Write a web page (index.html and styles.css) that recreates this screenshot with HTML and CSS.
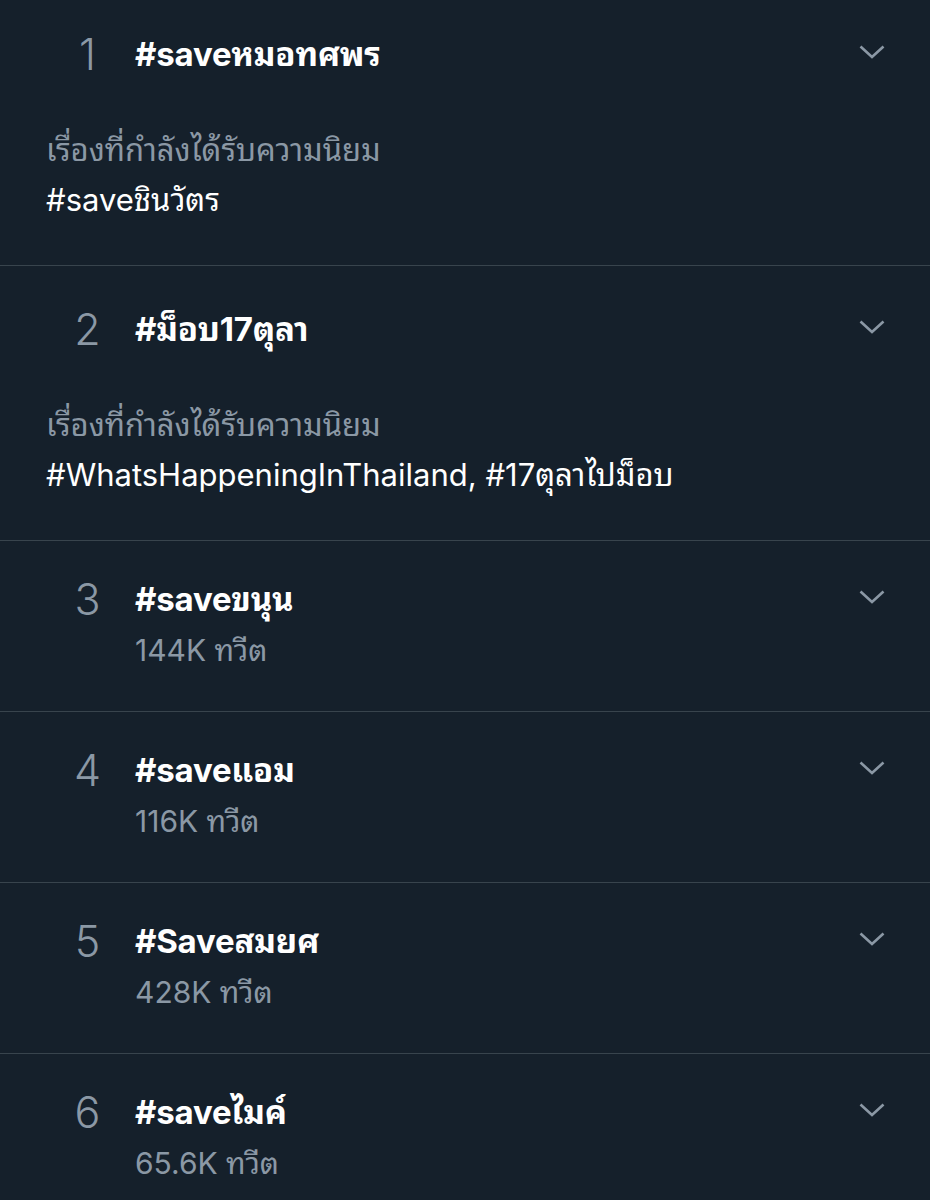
FILE: index.html
```html
<!DOCTYPE html>
<html lang="th">
<head>
    <meta charset="UTF-8">
    <meta name="viewport" content="width=device-width, initial-scale=1.0">
    <title>เทรนด์</title>
    <link rel="stylesheet" href="styles.css">
</head>
<body>
    <div class="trends">

        <div class="trend">
            <div class="rank">1</div>
            <div class="title">#saveหมอทศพร</div>
            <div class="more"><svg viewBox="0 0 26 14"><path d="M1.5 1.5 L13 12 L24.5 1.5"/></svg></div>
            <div class="related">
                <div class="label">เรื่องที่กำลังได้รับความนิยม</div>
                <div class="tags">#saveชินวัตร</div>
            </div>
        </div>

        <div class="trend">
            <div class="rank">2</div>
            <div class="title">#ม็อบ17ตุลา</div>
            <div class="more"><svg viewBox="0 0 26 14"><path d="M1.5 1.5 L13 12 L24.5 1.5"/></svg></div>
            <div class="related">
                <div class="label">เรื่องที่กำลังได้รับความนิยม</div>
                <div class="tags">#WhatsHappeningInThailand, #17ตุลาไปม็อบ</div>
            </div>
        </div>

        <div class="trend">
            <div class="rank">3</div>
            <div class="title">#saveขนุน</div>
            <div class="more"><svg viewBox="0 0 26 14"><path d="M1.5 1.5 L13 12 L24.5 1.5"/></svg></div>
            <div class="count">144K ทวีต</div>
        </div>

        <div class="trend">
            <div class="rank">4</div>
            <div class="title">#saveแอม</div>
            <div class="more"><svg viewBox="0 0 26 14"><path d="M1.5 1.5 L13 12 L24.5 1.5"/></svg></div>
            <div class="count">116K ทวีต</div>
        </div>

        <div class="trend">
            <div class="rank">5</div>
            <div class="title">#Saveสมยศ</div>
            <div class="more"><svg viewBox="0 0 26 14"><path d="M1.5 1.5 L13 12 L24.5 1.5"/></svg></div>
            <div class="count">428K ทวีต</div>
        </div>

        <div class="trend">
            <div class="rank">6</div>
            <div class="title">#saveไมค์</div>
            <div class="more"><svg viewBox="0 0 26 14"><path d="M1.5 1.5 L13 12 L24.5 1.5"/></svg></div>
            <div class="count">65.6K ทวีต</div>
        </div>

    </div>
</body>
</html>
```

FILE: styles.css
```css
html, body {
    margin: 0;
    padding: 0;
    background-color: #15202b;
}

body {
    font-family: Inter, "Noto Sans Thai Looped", "Noto Sans Thai", "Noto Sans", sans-serif;
    color: #ffffff;
    overflow: hidden;
}

.trends {
    margin-top: -9px;
}

.trend {
    display: grid;
    grid-template-columns: 89px 1fr 60px;
    padding: 33px 45px 39px 46px;
    border-bottom: 1px solid #38444d;
}

.trend:has(.related) {
    padding-top: 38px;
    padding-bottom: 40px;
}

.rank {
    font-size: 43px;
    font-weight: 300;
    line-height: 50px;
    color: #8b98a5;
    text-align: center;
    padding-right: 6px;
}

.title {
    font-size: 33px;
    font-weight: 700;
    line-height: 50px;
    letter-spacing: -0.2px;
}

.more {
    display: flex;
    justify-content: flex-end;
    align-items: center;
    padding-bottom: 4px;
}

.more svg {
    width: 26px;
    height: 14px;
    fill: none;
    stroke: #8b98a5;
    stroke-width: 2.6;
}

.count {
    grid-column: 2 / 3;
    font-size: 30px;
    line-height: 44px;
    margin-top: 4px;
    color: #8b98a5;
}

.related {
    grid-column: 1 / -1;
    padding-top: 46px;
}

.label {
    font-size: 31px;
    line-height: 50px;
    color: #8b98a5;
}

.tags {
    font-size: 31px;
    line-height: 50px;
}
```
